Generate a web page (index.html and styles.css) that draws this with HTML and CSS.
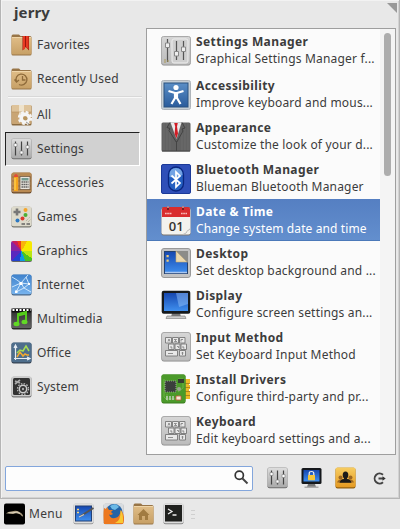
FILE: index.html
```
<!DOCTYPE html>
<html lang="en">
<head>
<meta charset="utf-8">
<title>Menu</title>
<link rel="stylesheet" href="styles.css">
</head>
<body>
<svg class="defs" width="0" height="0">
  <defs>
    <linearGradient id="silver" x2="0" y2="1"><stop stop-color="#dedede"/><stop offset="1" stop-color="#aaa"/></linearGradient>
    <linearGradient id="plate" x2="0" y2="1"><stop stop-color="#d6d6d6"/><stop offset="1" stop-color="#bcbcbc"/></linearGradient>
    <linearGradient id="tan" x2="0" y2="1"><stop stop-color="#e0bd87"/><stop offset="1" stop-color="#c7a066"/></linearGradient>
    <linearGradient id="blue" x2="0" y2="1"><stop stop-color="#5a8ec6"/><stop offset="1" stop-color="#2a5c9c"/></linearGradient>
    <linearGradient id="sky" x2="0" y2="1"><stop stop-color="#3f82cc"/><stop offset="1" stop-color="#78b4ee"/></linearGradient>
    <linearGradient id="screen" x2="0" y2="1"><stop stop-color="#1647b0"/><stop offset="1" stop-color="#3f8fee"/></linearGradient>
    <linearGradient id="dark" x2="0" y2="1"><stop stop-color="#333"/><stop offset="1" stop-color="#626262"/></linearGradient>
    <linearGradient id="gold" x2="0" y2="1"><stop stop-color="#f7cd62"/><stop offset="1" stop-color="#e59a22"/></linearGradient>
  </defs>
  <symbol id="folder" viewBox="0 0 21 22">
    <path d="M.5 2.500Q.5.500 2 .5h6l1.500 1.500H19q1.500 0 1.500 1.500V20q0 1.500-1.500 1.500H2Q.5 21.500.5 20z" fill="#987547"/>
    <rect x=".5" y="3" width="20" height="17.500" rx="1.500" fill="url(#tan)"/>
    <path d="M1 3.500h19" stroke="#efd5a8"/>
  </symbol>
  <symbol id="sliders" viewBox="0 0 21 22">
    <rect x=".5" y=".8" width="20" height="20.500" rx="2" fill="#666"/>
    <rect x=".5" y=".5" width="20" height="19.500" rx="2" fill="url(#silver)" stroke="#b5b5b5" stroke-width=".6"/>
    <path d="M4.500 3.500v14M10.500 3.500v14M16.500 3.500v14" stroke="#444" stroke-width="1.200"/>
    <path d="M3 5.500h3v3H3zM9 13h3v3H9zM15 7.500h3v3h-3z" fill="#fff" stroke="#888" stroke-width=".7"/>
  </symbol>
  <symbol id="keys" viewBox="0 0 30 30">
    <rect x=".5" y=".5" width="29" height="29" rx="2.500" fill="#858585"/>
    <rect x=".5" y=".5" width="29" height="28" rx="2.500" fill="url(#plate)" stroke="#aaa"/>
    <g fill="#e8e8e8" stroke="#777" stroke-width=".9">
      <path d="M4.500 5.500h6v5.500h-6zM11.500 5.500h6v5.500h-6zM18.500 5.500h5.500v5.500h-5.500zM7.500 12h5.500v5.500H7.500zM14 12h5v5.500h-5zM20 12h5.500v5.500H20zM4.500 18.500h12v5.500h-12zM18.500 18.500h6v5.500h-6z"/>
    </g>
    <path d="M7 9.500l1-2.500 1 2.500M13 7.500h2.500l-2 2H16M20 9.500v-2h2M10 14v2h1.500M16 14.500h1.500V16M22 14v2h1.500M7 21.500h5M21.500 20v3M20.500 21h2" fill="none" stroke="#777" stroke-width=".8"/>
  </symbol>
</svg>

<main class="window">
  <header class="head"><h1>jerry</h1><span class="resize"></span></header>
  <div class="content">
    <nav class="categories">
      <a class="cat"><svg viewBox="0 0 21 22"><use href="#folder"/><path d="M11.500 2H18v14.500l-3.200-3.500-3.300 3.500z" fill="#9c160c"/><path d="M12 2h2v13l-2 .8zM15 2h2.500v13.500L15 13z" fill="#e73a22"/></svg>Favorites</a>
      <a class="cat"><svg viewBox="0 0 21 22"><use href="#folder"/><path d="M5.500 14a5.500 5.500 0 1 1 2.500 2.500M3.500 11.500l2 2.500L8 12M11.500 8v4h3" fill="none" stroke="#8f6b3a" stroke-width="1.300"/></svg>Recently Used</a>
      <hr>
      <a class="cat"><svg viewBox="0 0 21 22"><rect x=".5" y="1" width="20" height="20.500" rx="1.500" fill="#8b6c42"/><rect x=".5" y="1" width="20" height="19" rx="1.500" fill="#c9a574"/><path d="M1 1h19v7H1z" fill="#dec39a"/><path d="M8 1h5v10H8z" fill="#eee2cb"/><path d="M.5 8h20" stroke="#b48c58" stroke-width=".6"/><circle cx="14" cy="14" r="3.900" fill="none" stroke="#f5f5f5" stroke-width="3.600"/><circle cx="14" cy="14" r="6.200" fill="none" stroke="#f5f5f5" stroke-width="2" stroke-dasharray="2.800 2.070"/><circle cx="14.500" cy="14.500" r="2.100" fill="#b7955f"/><path d="M15 18l3 2" stroke="#999"/></svg>All</a>
      <a class="cat active"><svg><use href="#sliders"/></svg>Settings</a>
      <a class="cat"><svg viewBox="0 0 21 22"><rect x=".5" y=".8" width="20" height="20.700" rx="2" fill="#69482a"/><rect x=".5" y=".5" width="20" height="19.700" rx="2" fill="#b98a53"/><path d="M1 5h19M1 9h19M1 14h19M1 17.500h19" stroke="#98683a" stroke-width=".7"/><path d="M3 4h4v15H3z" fill="#f4a41e"/><path d="M4 6v12" stroke="#ffdf61"/><path d="M3 3.500q2-3 4 0V5H3z" fill="#e44b35"/><path d="M9 4.500h10v13H9z" fill="#e8e5de" stroke="#695139" stroke-width=".7"/><path d="M10.500 6h7v2.500h-7z" fill="#719b91"/><path d="M10.500 10h7M10.500 12.500h7M10.500 15h7" stroke="#555" stroke-width="1.400" stroke-dasharray="1.400 .6"/></svg>Accessories</a>
      <a class="cat"><svg viewBox="0 0 21 22"><rect x=".5" y=".8" width="20" height="20.700" rx="2" fill="#77776f"/><rect x=".5" y=".5" width="20" height="19.700" rx="2" fill="#dddacb"/><path d="M6 2.500v7M2.500 6h7" stroke="#777" stroke-width="2.600"/><circle cx="14.500" cy="4" r="2" fill="#f5a42a"/><circle cx="14.500" cy="9" r="2" fill="#4daf36"/><circle cx="11.500" cy="12.500" r="2" fill="#dc392c"/><circle cx="6.500" cy="14.500" r="2" fill="#2c78c2"/><path d="M10.500 18h3.500M15.500 18H19" stroke="#666" stroke-width="1.400"/><path d="M15 15l4-4M17 16l3-3" stroke="#aaa793" stroke-dasharray="1 1"/></svg>Games</a>
      <a class="cat"><span class="wheel"></span>Graphics</a>
      <a class="cat"><svg viewBox="0 0 21 22"><rect x=".5" y=".8" width="20" height="20.700" rx="2" fill="#4a6889"/><rect x=".5" y=".5" width="20" height="19.700" rx="2" fill="url(#sky)"/><path d="M1 3l5 3 4 3 7-8M10 9l-5 9M10 9l8 1M5 18l8-4 7 4M18 10l-5 4-3-5M18 10L15 3M1 13l9-4" fill="none" stroke="#d9edff" stroke-width=".9"/><path d="M8.500 8h3v3h-3zM4 16.500h2.500V19H4zM17 9h2v2h-2z" fill="#fff"/></svg>Internet</a>
      <a class="cat"><svg viewBox="0 0 21 22"><rect x=".5" y=".8" width="20" height="20.700" rx="2" fill="#292929"/><rect x=".5" y="4" width="20" height="16" rx="1" fill="url(#dark)"/><path d="M.5 2.500h20" stroke="#111" stroke-width="4"/><path d="M1.500 2h18" stroke="#fff" stroke-width="2" stroke-dasharray="2 1.500"/><path d="M7 15V6l8-2v9" fill="none" stroke="#55cc1a" stroke-width="2"/><path d="M7 7.500l8-2" stroke="#55cc1a" stroke-width="2"/><ellipse cx="5.500" cy="16" rx="3" ry="2.200" fill="#62d926"/><ellipse cx="13.500" cy="14" rx="3" ry="2.200" fill="#62d926"/></svg>Multimedia</a>
      <a class="cat"><svg viewBox="0 0 21 22"><rect x=".5" y=".8" width="20" height="20.700" rx="2" fill="#364455"/><rect x=".5" y=".5" width="20" height="19.700" rx="2" fill="#4e6e8c"/><path d="M4.500 18V4M3 16.500h15M3 6l1.500-3L6 6M16 15l3 1.500-3 1.500" fill="none" stroke="#e7edf3" stroke-width="1.200"/><path d="M6 11l3-3 3 1 3-5 3 5" fill="none" stroke="#a6dc54" stroke-width="1.500"/><path d="M6 15l3-5 3 4 2-2 2 1h2" fill="none" stroke="#f3a92f" stroke-width="1.500"/></svg>Office</a>
      <a class="cat"><svg viewBox="0 0 21 22"><rect x=".5" y=".8" width="20" height="20.700" rx="2" fill="#777"/><rect x=".5" y=".5" width="20" height="19.700" rx="2" fill="#ccc"/><rect x="2" y="2" width="17" height="17" rx="1.500" fill="#333"/><circle cx="12" cy="13" r="3.700" fill="none" stroke="#ccc" stroke-width="1.500"/><circle cx="12" cy="13" r="5.500" fill="none" stroke="#bbb" stroke-width="1.300" stroke-dasharray="1.500 1.380"/><circle cx="12" cy="13" r="1.200" fill="#aaa"/><path d="M4 8l5-4M4 5l5 2" stroke="#aaa" stroke-width="1.700"/></svg>System</a>
    </nav>

    <section class="apps">
      <div class="rows">
        <article class="app first"><svg viewBox="0 0 30 30"><rect x=".5" y=".8" width="29" height="28.700" rx="2" fill="#888"/><rect x=".5" y=".5" width="29" height="28" rx="2" fill="url(#plate)" stroke="#aaa"/><rect x="11" y="3" width="16" height="24" rx="2" fill="#cfcfcf" stroke="#eee"/><path d="M6.500 3v23M15.500 5v19M22.500 5v19" stroke="#555" stroke-width="1.200"/><path d="M4.500 7h4v4.500h-4zM13.500 15.500h4V20h-4zM20.500 11h4v4.500h-4z" fill="#eee" stroke="#888"/><path d="M4 23v4M7 24v2" stroke="#aa995b"/></svg><div class="txt"><b>Settings Manager</b><p>Graphical Settings Manager f...</p></div></article>
        <article class="app"><svg viewBox="0 0 30 30"><rect x=".5" y=".5" width="29" height="29" rx="2" fill="#c5ced5" stroke="#aeb4ba"/><rect x="3" y="3" width="24" height="24" fill="url(#blue)" stroke="#2a5380"/><circle cx="15" cy="7.500" r="2.600" fill="#fff"/><path d="M7.500 11l6.500 2h2l6.500-2M14 13v5l-3.500 6M16 13v5l3.500 6" fill="none" stroke="#fff" stroke-width="2.200"/><path d="M13 12h4v7h-4z" fill="#fff"/></svg><div class="txt"><b>Accessibility</b><p>Improve keyboard and mous...</p></div></article>
        <article class="app"><svg viewBox="0 0 30 30"><rect x=".5" y=".5" width="29" height="29" rx="1.500" fill="#626262"/><path d="M3 1v28M6 1v28M24 1v28M27 1v28M9 10v19M21 10v19" stroke="#6f6f6f" stroke-width=".8"/><path d="M9.500 .5h11L15.500 17z" fill="#e9e9e9"/><path d="M13.200 1h3.600l-.8 3.500 1 7-1.700 5-1.700-5 .6-7z" fill="#d11c25"/><path d="M9 .5l-3 5 3 1-1 2 7.500 12L22 9l-1-2 3-1-3-5.500" fill="none" stroke="#424242"/><path d="M15.500 19v10M1 29h28" stroke="#444"/></svg><div class="txt"><b>Appearance</b><p>Customize the look of your d...</p></div></article>
        <article class="app"><svg viewBox="0 0 30 30"><rect x=".5" y=".5" width="29" height="29" rx="1.500" fill="#2f4fb8" stroke="#1c3a98"/><rect x="7.500" y="3" width="15" height="24" rx="7.500" fill="#245fc0" stroke="#0a2680" stroke-width="1.300"/><path d="M8.500 11q0-7 6.500-7t6.500 7q-6 3-13 2z" fill="#8cbaf0" opacity=".75"/><path d="M10.500 11.500l8.500 7.500-4 4V8l4 4-8.500 7.500" fill="none" stroke="#fff" stroke-width="1.700"/></svg><div class="txt"><b>Bluetooth Manager</b><p>Blueman Bluetooth Manager</p></div></article>
        <article class="app selected"><svg viewBox="0 0 30 30"><rect x=".5" y="1" width="29" height="28.500" rx="2" fill="#7c7670"/><rect x=".5" y="2" width="29" height="26.500" rx="2" fill="#f3f2ee"/><path d="M1 11V3q0-2 2-2h24q2 0 2 2v8z" fill="#d92d2e"/><path d="M7 0v4M22 0v4" stroke="#771c20" stroke-width="2"/><path d="M7 0v2M22 0v2" stroke="#eee"/><path d="M4 7.500h7M20 7.500h6" stroke="#f9bbb8" stroke-width="1.700" stroke-dasharray="1.700 .5"/><text x="15.300" y="25">01</text><path d="M22 28.500q4-1 4.500-4 2 0 2.500-2" fill="none" stroke="#bbb"/></svg><div class="txt"><b>Date &amp; Time</b><p>Change system date and time</p></div></article>
        <article class="app"><svg viewBox="0 0 30 30"><rect x=".5" y=".5" width="29" height="29" rx="2.500" fill="#c3c3c3" stroke="#999"/><rect x="3.500" y="3.500" width="23" height="22" fill="url(#screen)" stroke="#244270"/><path d="M5.500 7h2.200v2.200H5.500zM5.500 11.500h2.200v2.200H5.500z" fill="#f1cc76"/><path d="M15 3h12v12z" fill="#8c8c89"/><path d="M15 3v11h11z" fill="#ead7ae" stroke="#c5a76e" stroke-width=".6"/><path d="M4 24.500h22" stroke="#a9c7f1" stroke-width="1.500"/></svg><div class="txt"><b>Desktop</b><p>Set desktop background and ...</p></div></article>
        <article class="app"><svg viewBox="0 0 30 30"><path d="M11 23h8l1 4H10z" fill="#777"/><path d="M6 26h18l1 2.500H5z" fill="#ccc" stroke="#777" stroke-width=".6"/><rect x=".7" y=".7" width="28.600" height="23" rx="2" fill="#161a1d"/><rect x="3" y="3" width="24" height="18" fill="url(#screen)"/><path d="M15 3h12v11l-9 3z" fill="#9dcbff" opacity=".45"/></svg><div class="txt"><b>Display</b><p>Configure screen settings an...</p></div></article>
        <article class="app"><svg><use href="#keys"/></svg><div class="txt"><b>Input Method</b><p>Set Keyboard Input Method</p></div></article>
        <article class="app"><svg viewBox="0 0 30 30"><path d="M23 5h6v4h-1v2h1v4h-1v2h1v8h-6z" fill="#edb928"/><path d="M24 9.500h5M24 13.500h5M24 17.500h5M24 21.500h5" stroke="#9f761c" stroke-width=".8"/><rect x=".5" y=".5" width="24" height="29" rx="2" fill="#3b7c1e"/><rect x=".5" y=".5" width="24" height="28" rx="2" fill="#4b9a2a"/><path d="M3 5v18l4 4M6 20v5h12v-4M17 5h5v9l-5 4" fill="none" stroke="#76b94e" stroke-width=".8"/><rect x="4" y="7" width="11" height="11" fill="#3a3e3c" stroke="#8fa088" stroke-width="1.200" stroke-dasharray="1 1"/><path d="M17 5h6v4h-6z" fill="#333b31"/><path d="M6 22v4M9 22v4M12 22v4" stroke="#ddd" stroke-width="1.200"/><path d="M15 22h5v4h-5z" fill="#f4ead8" stroke="#c55137" stroke-width=".8"/><circle cx="18" cy="15" r="2" fill="#98a58e"/></svg><div class="txt"><b>Install Drivers</b><p>Configure third-party and pr...</p></div></article>
        <article class="app"><svg><use href="#keys"/></svg><div class="txt"><b>Keyboard</b><p>Edit keyboard settings and a...</p></div></article>
      </div>
      <div class="scrollbar"><span></span></div>
    </section>
  </div>

  <footer class="actions">
    <div class="search"><svg viewBox="0 0 15 15"><circle cx="5.300" cy="5.300" r="4.100" fill="none" stroke="#333" stroke-width="1.700"/><path d="M8.500 8.500l5 5" stroke="#444" stroke-width="2"/></svg></div>
    <svg class="ico"><use href="#sliders"/></svg>
    <svg class="ico" viewBox="0 0 21 22"><path d="M7 17h7l1 3H6z" fill="#777"/><path d="M3.500 19.500h14v1.500h-14z" fill="#aaa"/><rect x=".5" y="1" width="20" height="16" rx="1.500" fill="#15181c"/><rect x="2.500" y="3" width="16" height="11.500" fill="url(#screen)"/><path d="M8.200 9V6.500q0-2 2.300-2t2.300 2V9" fill="none" stroke="#eee" stroke-width="1.200"/><rect x="7" y="8" width="7" height="5.200" rx=".5" fill="#f4c53a"/></svg>
    <svg class="ico" viewBox="0 0 21 22"><rect x=".5" y=".8" width="20" height="20.700" rx="2" fill="#94610f"/><rect x=".5" y=".5" width="20" height="19.700" rx="2" fill="url(#gold)"/><circle cx="5.500" cy="10.500" r="2" fill="#9b6623"/><circle cx="15.500" cy="10.500" r="2" fill="#9b6623"/><path d="M2 15.500q1-3 4-3h9q3 0 4 3z" fill="#9b6623"/><ellipse cx="10.500" cy="8" rx="2.800" ry="3.500" fill="#1c1b19"/><path d="M4.500 15.800q1-3.500 4.500-3.800v-2h3v2q3.500.3 4.500 3.800z" fill="#1c1b19"/></svg>
    <svg class="out" viewBox="0 0 14 13"><path d="M11 2.800A5 5 0 1 0 11 10.200M6.500 6.500h5" fill="none" stroke="#444" stroke-width="1.900"/><path d="M10.500 4.200l3.200 2.300-3.200 2.300z" fill="#333"/></svg>
  </footer>
</main>

<div class="taskbar">
  <svg class="ico" viewBox="0 0 21 22"><rect x="0" y=".5" width="21" height="21" rx="2" fill="#000"/><path d="M2 10.500q2-2 5-2l4-.8q5 0 8 4.500l-.5 1.500-2.500-2.500-4-1-3 .8-4-.5z" fill="#a8997c"/><path d="M4.500 9.800h4.500l4-.8 3 1.500" fill="none" stroke="#e8dfca" stroke-width=".9"/></svg>
  <span class="label">Menu</span>
  <svg class="ico" viewBox="0 0 21 22"><rect x=".5" y=".8" width="20" height="20.500" rx="2" fill="#999"/><rect x=".5" y=".5" width="20" height="19.700" rx="2" fill="#ddd"/><rect x="2.500" y="3" width="16" height="15" fill="url(#screen)" stroke="#234176"/><path d="M4 6.500h2M4 9.500h2" stroke="#f5d57d" stroke-width="1.600"/><path d="M7 13.500L20.500 5" stroke="#555" stroke-width="1.900"/><path d="M6 14l5-2.500" stroke="#c9c9c9" stroke-width="1.300"/></svg>
  <svg class="ico" viewBox="0 0 21 22"><rect x=".5" y=".8" width="20" height="20.500" rx="2" fill="#999"/><rect x=".5" y=".5" width="20" height="19.700" rx="2" fill="#d8dce0"/><circle cx="11" cy="9.500" r="8.500" fill="#2463a6"/><path d="M7 3q6-4 9 1l-4 3-3-1z" fill="#6bb9e6"/><path d="M1 5l2 1 1-2 2 3h4l-2 2 2 2q-3 2-4 0 1 5 6 4 5-1 6-8 5 7 2 14H1Q0 12 1 5z" fill="#ed7920"/><path d="M17.500 7q3 3 2.500 13h-8q6-2 5.500-13z" fill="#f8c933"/></svg>
  <svg class="ico" viewBox="0 0 21 22"><use href="#folder"/><path d="M10.500 6l6 6H15v5h-3v-4H9v4H6v-5H4.500z" fill="#a17b41"/></svg>
  <svg class="ico" viewBox="0 0 21 22"><rect x=".5" y=".8" width="20" height="20.500" rx="2" fill="#888"/><rect x=".5" y=".5" width="20" height="19.700" rx="2" fill="#ddd"/><rect x="2" y="2" width="17" height="16.500" fill="#20211f"/><path d="M5 6l4 2.500L5 11M9.500 12h4" fill="none" stroke="#eee" stroke-width="1.300"/></svg>
  <span class="grip"></span>
</div>
</body>
</html>
```
FILE: styles.css
```
* { box-sizing: border-box; }
body { margin: 0; width: 400px; height: 529px; overflow: hidden; background: #e8e8e8; color: #3c3c3c; font: 12px/16px "Noto Sans", "Open Sans", sans-serif; }
.defs { position: absolute; }
svg { display: block; flex: none; }
.window { height: 499px; border: solid #b5b5b5; border-width: 0 1px 1px; box-shadow: inset 1px 1px #f2f2f2, inset -1px -1px #d2d2d2; }
.head { display: flex; justify-content: space-between; height: 28px; padding: 3px 2px 0 13px; }
h1 { margin: 0; font-size: 15px; line-height: 19px; letter-spacing: .1px; }
.resize { width: 10px; height: 10px; background: #999; clip-path: polygon(0 0, 100% 0, 100% 100%); }
.content { display: flex; height: 427px; }
.categories { width: 145px; padding-left: 4px; }
.cat { display: flex; align-items: center; gap: 5px; width: 135px; height: 34px; padding-left: 6px; letter-spacing: .17px; }
.cat svg, .ico { width: 21px; height: 22px; }
.cat.active { background: #d1d1d1; border: 1px solid #222; border-right-color: #fff; border-bottom-color: #fff; padding-left: 5px; }
.categories hr { height: 2px; margin: 0 4px 0 3px; border: 0; background: linear-gradient(#d8d8d8 50%, #f8f8f8 50%); }
.wheel { width: 21px; height: 21px; border-radius: 2px; background: repeating-conic-gradient(#f7e900 0 30deg, #98df12 0 60deg, #37b51f 0 90deg, #0cabc7 0 120deg, #276ae7 0 150deg, #232ec0 0 180deg, #6528be 0 210deg, #7925a0 0 240deg, #bd1cbd 0 270deg, #e52c2c 0 300deg, #f2561b 0 330deg, #f9b30d 0 360deg); background: conic-gradient(#f9b30d 0 30deg, #f7e900 0 90deg, #b9e612 0 125deg, #4cc41f 0 160deg, #0c9be0 0 190deg, #2342d0 0 225deg, #5a28be 0 270deg, #8a25a0 0 315deg, #c81c5d 0 335deg, #ef3b1b 0 360deg); border-bottom: 1px solid #666; }
.apps { display: flex; width: 250px; height: 427px; border: 1px solid #9e9e9e; background: #fbfbfb; }
.rows { flex: 1; min-width: 0; }
.app { display: flex; align-items: center; gap: 5px; height: 42px; padding: 1px 0 0 14px; white-space: nowrap; }
.app.first { margin-bottom: 2px; }
.app > svg { width: 30px; height: 30px; }
.app text { font: 600 13px "Open Sans", sans-serif; fill: #35332f; text-anchor: middle; }
.txt { padding-bottom: 2px; }
.txt b { display: block; letter-spacing: .4px; line-height: 17px; }
.txt p { margin: 0; line-height: 17px; letter-spacing: .18px; }
.selected { color: #fff; background: linear-gradient(#557fc2, #638fce); box-shadow: inset 0 -1px #4b79b9; }
.selected p { letter-spacing: .1px; }
.scrollbar { width: 15px; padding: 4px 4px 0; background: #f4f4f4; }
.scrollbar span { display: block; width: 7px; height: 143px; border-radius: 4px; background: #adadad; }
.actions { display: flex; align-items: center; height: 43px; padding: 3px 0 0 4px; }
.search { display: flex; justify-content: flex-end; align-items: center; width: 248px; height: 25px; margin-right: 14px; padding: 0 3px 2px 0; border: 1px solid #83a6dc; border-radius: 2px; background: #fdfdfd; }
.search svg { width: 15px; height: 15px; }
.actions .ico { margin-right: 13px; }
.actions .out { width: 14px; height: 13px; margin-left: 3px; }
.taskbar { display: flex; align-items: center; height: 30px; padding-left: 4px; }
.label { width: 48px; padding-left: 4px; letter-spacing: .3px; }
.taskbar .label ~ .ico { margin-right: 9px; }
.grip { width: 4px; height: 9px; margin-left: -2px; background: repeating-linear-gradient(#cfcfcf 0 1px, transparent 1px 4px); }
```
